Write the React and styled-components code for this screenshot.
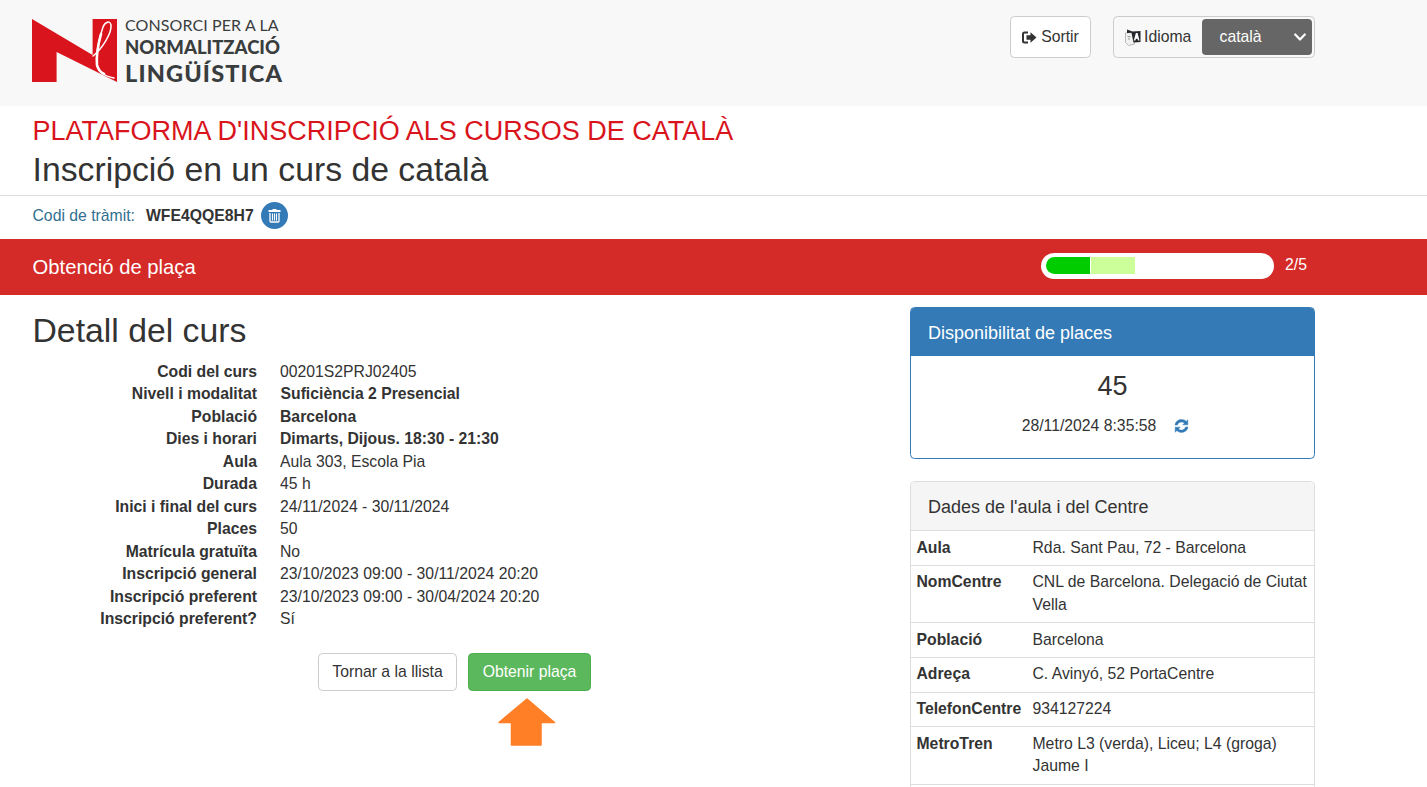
import React from "react";
import styled, { createGlobalStyle } from "styled-components";

const Global = createGlobalStyle`
  html, body { margin: 0; padding: 0; height: 787px; overflow: hidden; background: #fff; }
  body { font-family: "Liberation Sans", Arial, sans-serif; font-size: 15.75px; line-height: 22.5px; color: #333; }
  * { box-sizing: border-box; }
`;

const Page = styled.div`height: 787px; overflow: hidden;`;

const TopBar = styled.header`
  height: 106px; background: #f8f8f8; display: flex; justify-content: space-between;
  align-items: flex-start; padding: 16px 112px 0 32px;
`;
const LogoWrap = styled.div`display: flex; gap: 8px; margin-top: 3px;`;
const LogoText = styled.div`display: flex; flex-direction: column; font-family: Lato, "Open Sans", sans-serif; color: #3a3d3d; white-space: nowrap; margin-top: -5px;`;
const LogoLine = styled.span`
  font-size: ${p => p.$size}px; font-weight: ${p => p.$weight}; line-height: ${p => p.$lh}px;
  letter-spacing: ${p => p.$ls}px;
`;
const TopActions = styled.div`display: flex; gap: 22px;`;
const OutlineBtn = styled.button`
  font: inherit; color: #333; background: #fff; border: 1px solid #ccc; border-radius: 4.5px;
  display: inline-flex; align-items: center; justify-content: center; cursor: pointer;
  height: ${p => p.$h || 42}px; width: ${p => p.$w}px; gap: ${p => p.$gap || 4}px; padding: 0;
`;
const LangGroup = styled.div`
  width: 202px; height: 42px; border: 1px solid #ccc; border-radius: 4.5px; display: flex;
  align-items: center; justify-content: space-between; padding: 2px 2px 2px 11px; background: #f8f8f8;
`;
const LangLabel = styled.span`display: inline-flex; align-items: center; gap: 3px;`;
const LangSelect = styled.div`
  width: 110px; height: 36px; background: #666; color: #fff; border-radius: 4px; display: flex;
  align-items: center; justify-content: space-between; padding: 0 6px 0 17.5px;
`;

const TitleBlock = styled.div`padding: 10px 32.5px 0; height: 90px; border-bottom: 1px solid #ddd;`;
const Brand = styled.div`color: #d9141c; font-size: 27px; line-height: 30px; white-space: nowrap;`;
const PageTitle = styled.h2`margin: 5px 0 0; font-size: 33.75px; font-weight: 400; line-height: 37px; color: #333;`;

const CodeRow = styled.div`height: 43px; padding: 0 32.5px 2px; display: flex; align-items: center; font-size: 15.75px;`;
const CodeLabel = styled.span`color: #31708f; width: 113.5px;`;
const CodeValue = styled.strong`font-weight: 700; margin-right: 7px;`;
const RoundIcon = styled.span`
  width: 27px; height: 27px; border-radius: 50%; background: #337ab7; display: inline-flex;
  align-items: center; justify-content: center; margin-bottom: 2px;
`;

const StepBand = styled.div`
  height: 56px; background: #d42a28; color: #fff; display: flex; align-items: center;
  justify-content: space-between; padding: 0 120px 0 32.5px; font-size: 20.25px;
`;
const Progress = styled.div`display: flex; align-items: center; gap: 11px; font-size: 15.75px; margin-top: -3px;`;
const Track = styled.div`
  width: 233px; height: 26px; background: #fff; border-radius: 13px; padding: 4px 5px; display: flex; gap: 1px;
`;
const Seg = styled.div`
  width: 44px; height: 17px; background: ${p => p.$c};
  border-radius: ${p => p.$first ? "9px 0 0 9px" : "0"};
`;

const Main = styled.div`display: grid; grid-template-columns: 877.5px 405px; padding: 12px 0 0 32.5px;`;
const Left = styled.section``;
const Heading = styled.h2`margin: 5px 0 11.5px; font-size: 33.75px; font-weight: 400; line-height: 37px;`;
const Dl = styled.div`display: grid; grid-template-columns: 224.5px 1fr; column-gap: 23px;`;
const Dt = styled.div`font-weight: 700; text-align: right;`;
const Dd = styled.div`font-weight: ${p => p.$b ? 700 : 400}; padding-left: ${p => p.$in ? 0.5 : 0}px;`;
const Actions = styled.div`
  display: flex; gap: 11px; margin-top: 22.5px; margin-left: 285.5px; position: relative;
`;
const PrimaryBtn = styled.button`
  font: inherit; color: #fff; background: #5cb85c; border: 1px solid #4cae4c; border-radius: 4.5px;
  width: 123px; height: 38px; padding: 0; cursor: pointer;
`;
const ArrowBox = styled.div`margin: 7px 0 0 465.5px; line-height: 0;`;

const Right = styled.aside`display: flex; flex-direction: column; gap: 22px;`;
const Panel = styled.div`
  border: 1px solid ${p => p.$c}; border-radius: 4.5px; background: #fff; overflow: hidden;
  min-height: ${p => p.$min || 0}px;
`;
const PanelHead = styled.div`
  height: ${p => p.$h}px; padding: 3px 17px 0; display: flex; align-items: center; font-size: 18px;
  background: ${p => p.$bg}; color: ${p => p.$fg}; border-bottom: 1px solid ${p => p.$line};
`;
const PanelBody = styled.div`height: 102px; text-align: center; padding-top: 11px;`;
const Count = styled.div`font-size: 27px; line-height: 38px; color: #333;`;
const Stamp = styled.div`display: flex; justify-content: center; align-items: center; gap: 18px; margin-top: 10px; height: 22px; padding-right: 14px;`;
const InfoRow = styled.div`
  display: grid; grid-template-columns: 116px 1fr; padding: 5.625px 5px 5.625px 5.5px;
  border-bottom: 1px solid #ddd;
`;
const InfoKey = styled.div`font-weight: 700; white-space: nowrap;`;
const InfoVal = styled.div``;

const rows = [
  ["Codi del curs", "00201S2PRJ02405"],
  ["Nivell i modalitat", "Sufici\u00e8ncia 2 Presencial", 1, 1],
  ["Poblaci\u00f3", "Barcelona", 1],
  ["Dies i horari", "Dimarts, Dijous. 18:30 - 21:30", 1],
  ["Aula", "Aula 303, Escola Pia"],
  ["Durada", "45 h"],
  ["Inici i final del curs", "24/11/2024 - 30/11/2024"],
  ["Places", "50"],
  ["Matr\u00edcula gratu\u00efta", "No"],
  ["Inscripci\u00f3 general", "23/10/2023 09:00 - 30/11/2024 20:20"],
  ["Inscripci\u00f3 preferent", "23/10/2023 09:00 - 30/04/2024 20:20"],
  ["Inscripci\u00f3 preferent?", "S\u00ed"],
];
const info = [
  ["Aula", "Rda. Sant Pau, 72 - Barcelona"],
  ["NomCentre", "CNL de Barcelona. Delegaci\u00f3 de Ciutat Vella"],
  ["Poblaci\u00f3", "Barcelona"],
  ["Adre\u00e7a", "C. Aviny\u00f3, 52 PortaCentre"],
  ["TelefonCentre", "934127224"],
  ["MetroTren", "Metro L3 (verda), Liceu; L4 (groga) Jaume I"],
];

const LogoMark = () => (
  <svg width="85" height="63" viewBox="0 0 85 63">
    <path fill="#d9141c" d="M0 0 L60.6 36 V0 H85 V63 L24.6 33 V63 H0 Z" />
    <path fill="none" stroke="#fff" strokeWidth="1.5" strokeLinecap="round"
      d="M61 37 C70 30 80 14 79 6 C78 1 73 3 71 8 C67 20 64 36 65 46 C66 53 72 57 82 59" />
    <path fill="none" stroke="#fff" strokeWidth="2.6" strokeLinecap="round"
      d="M69 15 C66 26 64 36 65 46 C66 50 68 53 72 55" />
  </svg>
);
const LogoutIcon = () => (
  <svg width="15" height="13" viewBox="0 0 15 13">
    <path fill="none" stroke="#333" strokeWidth="2" d="M6 1.5 H2.5 Q1 1.5 1 3 V10 Q1 11.5 2.5 11.5 H6" />
    <path fill="#333" d="M4.5 4.3 H8.5 V1.3 L14.5 6.5 L8.5 11.7 V8.7 H4.5 Z" />
  </svg>
);
const TranslateIcon = () => (
  <svg width="16" height="17" viewBox="0 0 16 17">
    <path fill="#f1f1f1" stroke="#a8a8a8" strokeWidth="0.8" d="M0.5 4 L7 3.5 L9.5 15 L3.5 16.5 L0.5 13.5 Z" />
    <path fill="#9a9a9a" d="M2.5 7 H5.5 V8 H2.5 Z M3.5 8.5 H4.5 V11 H3.5 Z" />
    <path fill="#23262b" d="M2 0.5 L7.5 2.5 L15.5 2 V13 L8.5 13.5 L6.5 3.8 L2 4 Z" />
    <path fill="#fff" d="M8.8 11.5 L10.9 4 L12.6 4 L14.5 11.5 L13 11.5 L12.6 9.8 L10.9 9.8 L10.4 11.5 Z" />
  </svg>
);
const TrashIcon = () => (
  <svg width="13" height="15" viewBox="0 0 13 15">
    <path fill="#fff" d="M4.5 1 H8.5 V2 H12.5 V4 H0.5 V2 H4.5 Z" />
    <path fill="none" stroke="#fff" strokeWidth="1.3" d="M2 5 V13 Q2 14 3 14 H10 Q11 14 11 13 V5" />
    <path stroke="#fff" strokeWidth="1.1" d="M4.5 5.5 V12.5 M6.5 5.5 V12.5 M8.5 5.5 V12.5" />
  </svg>
);
const RefreshIcon = () => (
  <svg width="15" height="14" viewBox="0 0 15 14">
    <path fill="#337ab7" stroke="#337ab7" strokeWidth="0.5" d="M1 6 C1.6 2.6 4.2 .6 7.5 .6 C9.4 .6 11 1.3 12.2 2.4 L13.8 .8 V5.8 H8.8 L10.5 4.1 C9.7 3.3 8.7 2.9 7.5 2.9 C5.6 2.9 4 4.1 3.4 6 Z" />
    <path fill="#337ab7" stroke="#337ab7" strokeWidth="0.5" d="M14 8 C13.4 11.4 10.8 13.4 7.5 13.4 C5.6 13.4 4 12.7 2.8 11.6 L1.2 13.2 V8.2 H6.2 L4.5 9.9 C5.3 10.7 6.3 11.1 7.5 11.1 C9.4 11.1 11 9.9 11.6 8 Z" />
  </svg>
);
const Chevron = () => (
  <svg width="12" height="9" viewBox="0 0 12 9">
    <path fill="none" stroke="#fff" strokeWidth="2.2" strokeLinecap="round" strokeLinejoin="round" d="M1.2 1.5 L6 6.5 L10.8 1.5" />
  </svg>
);
const UpArrow = () => (
  <svg width="58" height="48" viewBox="0 0 58 48">
    <path fill="#ff7f27" stroke="#ff7f27" strokeWidth="1.5" strokeLinejoin="round" d="M29 1 L56.5 24.5 L43 24.5 L43 47 L13.5 47 L13.5 24.5 L1 24.5 Z" />
  </svg>
);

export default function App() {
  return (
    <Page>
      <Global />
      <TopBar>
        <LogoWrap>
          <LogoMark />
          <LogoText>
            <LogoLine $size={16} $weight={400} $lh={22} $ls={0.1}>CONSORCI PER A LA</LogoLine>
            <LogoLine $size={18.5} $weight={900} $lh={23} $ls={0}>NORMALITZACIÓ</LogoLine>
            <LogoLine $size={23.5} $weight={900} $lh={28} $ls={1.15}>LINGÜÍSTICA</LogoLine>
          </LogoText>
        </LogoWrap>
        <TopActions>
          <OutlineBtn $w={81}><LogoutIcon />Sortir</OutlineBtn>
          <LangGroup>
            <LangLabel><TranslateIcon />Idioma</LangLabel>
            <LangSelect>català<Chevron /></LangSelect>
          </LangGroup>
        </TopActions>
      </TopBar>
      <TitleBlock>
        <Brand>PLATAFORMA D'INSCRIPCIÓ ALS CURSOS DE CATALÀ</Brand>
        <PageTitle>Inscripció en un curs de català</PageTitle>
      </TitleBlock>
      <CodeRow>
        <CodeLabel>Codi de tràmit:</CodeLabel>
        <CodeValue>WFE4QQE8H7</CodeValue>
        <RoundIcon><TrashIcon /></RoundIcon>
      </CodeRow>
      <StepBand>
        Obtenció de plaça
        <Progress>
          <Track>
            <Seg $c="#00cc00" $first />
            <Seg $c="#ccff99" />
          </Track>
          2/5
        </Progress>
      </StepBand>
      <Main>
        <Left>
          <Heading>Detall del curs</Heading>
          <Dl>
            {rows.map(([k, v, b, ind]) => (
              <React.Fragment key={k}>
                <Dt>{k}</Dt>
                <Dd $b={b} $in={ind}>{v}</Dd>
              </React.Fragment>
            ))}
          </Dl>
          <Actions>
            <OutlineBtn $w={139} $h={38}>Tornar a la llista</OutlineBtn>
            <PrimaryBtn>Obtenir plaça</PrimaryBtn>
          </Actions>
          <ArrowBox><UpArrow /></ArrowBox>
        </Left>
        <Right>
          <Panel $c="#337ab7">
            <PanelHead $h={48} $bg="#337ab7" $fg="#fff" $line="#337ab7">Disponibilitat de places</PanelHead>
            <PanelBody>
              <Count>45</Count>
              <Stamp>28/11/2024 8:35:58 <RefreshIcon /></Stamp>
            </PanelBody>
          </Panel>
          <Panel $c="#ddd" $min={340}>
            <PanelHead $h={49} $bg="#f5f5f5" $fg="#333" $line="#ddd">Dades de l'aula i del Centre</PanelHead>
            {info.map(([k, v]) => (
              <InfoRow key={k}>
                <InfoKey>{k}</InfoKey>
                <InfoVal>{v}</InfoVal>
              </InfoRow>
            ))}
          </Panel>
        </Right>
      </Main>
    </Page>
  );
}
